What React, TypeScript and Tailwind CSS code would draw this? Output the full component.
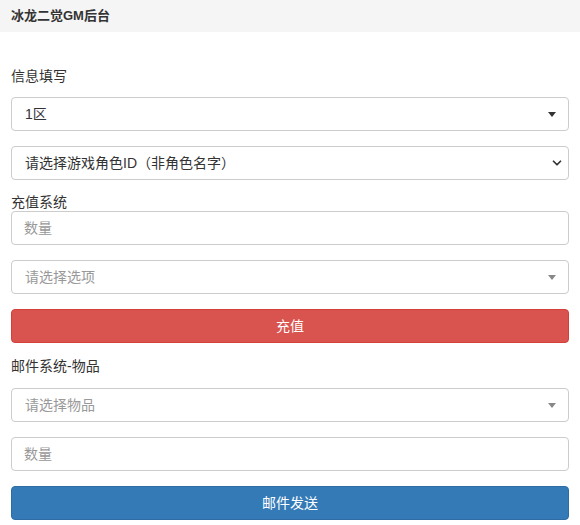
import { ChevronDown } from 'lucide-react';

const font = { fontFamily: '"Liberation Sans", "Noto Sans CJK SC", sans-serif' };

// bootstrap-ish select2 box with a small solid caret
const Select2Box = ({ text, placeholder }: { text: string; placeholder?: boolean }) => (
  <div className="flex h-[34px] items-center justify-between rounded border border-[#ccc] bg-white pl-[13px] pr-[12px]">
    <span className={placeholder ? 'text-[#999]' : 'text-[#333]'}>{text}</span>
    <span
      className={
        placeholder
          ? 'h-0 w-0 border-x-[4px] border-t-[5px] border-x-transparent border-t-[#888]'
          : 'h-0 w-0 border-x-[4px] border-t-[5px] border-x-transparent border-t-[#333]'
      }
    />
  </div>
);

const InputBox = ({ placeholder }: { placeholder: string }) => (
  <div className="flex h-[34px] items-center rounded border border-[#ccc] bg-white px-3 text-[#999]">
    {placeholder}
  </div>
);

export default function App() {
  return (
    <div className="min-h-screen bg-white text-[14px] text-[#333] [text-spacing-trim:space-all]" style={font}>
      {/* Header */}
      <div className="flex h-[32px] items-center bg-[#f5f5f5] px-[11px] text-[13px] font-bold text-[#333]">
        冰龙二觉GM后台
      </div>

      <div className="px-[11px]">
        <div className="mt-[34px] h-[20px] leading-[20px]">信息填写</div>

        <div className="mt-[11px]">
          <Select2Box text="1区" />
        </div>

        {/* native select */}
        <div className="mt-[15px] flex h-[34px] items-center justify-between rounded border border-[#ccc] bg-white pl-[13px] pr-[4px]">
          <span>请选择游戏角色ID（非角色名字）</span>
          <ChevronDown className="h-[14px] w-[14px] text-[#333]" strokeWidth={3} />
        </div>

        <div className="mt-[13px] h-[18px] leading-[18px]">充值系统</div>
        <InputBox placeholder="数量" />

        <div className="mt-[15px]">
          <Select2Box text="请选择选项" placeholder />
        </div>

        <div className="mt-[15px] flex h-[34px] items-center justify-center rounded border border-[#d43f3a] bg-[#d9534f] text-white">
          充值
        </div>

        <div className="mt-[13px] h-[20px] leading-[20px]">邮件系统-物品</div>

        <div className="mt-[12px]">
          <Select2Box text="请选择物品" placeholder />
        </div>

        <div className="mt-[15px]">
          <InputBox placeholder="数量" />
        </div>

        <div className="mt-[15px] flex h-[34px] items-center justify-center rounded border border-[#2e6da4] bg-[#337ab7] text-white">
          邮件发送
        </div>
      </div>
    </div>
  );
}
